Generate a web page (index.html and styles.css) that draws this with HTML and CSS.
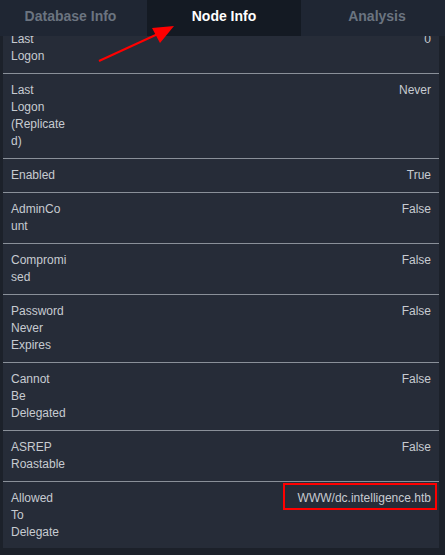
FILE: index.html
```html
<!DOCTYPE html>
<html>
<head>
<meta charset="utf-8">
<link rel="stylesheet" href="styles.css">
</head>
<body>
<div class="content">
  <div class="table">
    <div class="row"><div class="label">Last Logon</div><div class="value">0</div></div>
    <div class="row"><div class="label">Last Logon (Replicated)</div><div class="value">Never</div></div>
    <div class="row"><div class="label">Enabled</div><div class="value">True</div></div>
    <div class="row"><div class="label">AdminCount</div><div class="value">False</div></div>
    <div class="row"><div class="label">Compromised</div><div class="value">False</div></div>
    <div class="row"><div class="label">Password Never Expires</div><div class="value">False</div></div>
    <div class="row"><div class="label">Cannot Be Delegated</div><div class="value">False</div></div>
    <div class="row"><div class="label">ASREP Roastable</div><div class="value">False</div></div>
    <div class="row last"><div class="label">Allowed To Delegate</div><div class="value"><span class="highlight">WWW/dc.intelligence.htb</span></div></div>
  </div>
</div>
<div class="tabs">
  <div class="tab first">Database Info</div>
  <div class="tab active">Node Info</div>
  <div class="tab third">Analysis</div>
</div>
<svg class="arrow" width="445" height="80" viewBox="0 0 445 80">
  <line x1="99" y1="61" x2="160" y2="33" stroke="#ff0000" stroke-width="2"/>
  <polygon points="174,26 152,28 160,43" fill="#ff0000"/>
</svg>
</body>
</html>
```
FILE: styles.css
```css
html, body {
  margin: 0;
  padding: 0;
}
body {
  background: #1c212a;
  font-family: "Liberation Sans", Arial, sans-serif;
  font-size: 12px;
  color: #c7cbd1;
  width: 445px;
  height: 555px;
  overflow: hidden;
  position: relative;
}
.tabs {
  position: absolute;
  top: 0;
  left: 0;
  right: 0;
  height: 36px;
  display: grid;
  grid-template-columns: 147px 154px 144px;
  background: #1f2633;
}
.tab {
  display: flex;
  align-items: center;
  justify-content: center;
  font-weight: bold;
  font-size: 14px;
  color: #6b7480;
  padding-bottom: 4px;
  box-sizing: border-box;
}
.tab.first {
  padding-right: 6px;
}
.tab.third {
  padding-left: 8px;
}
.tab.active {
  background: #141a23;
  color: #ffffff;
}
.content {
  padding: 23px 6px 0 3px;
}
.table {
  background: #262c38;
}
.row {
  display: flex;
  justify-content: space-between;
  align-items: flex-start;
  padding: 8px 8px 8px 8px;
  line-height: 17px;
  border-bottom: 1px solid #8a9099;
}
.row.last {
  border-bottom: none;
  padding-bottom: 7px;
}
.label {
  width: 55.7px;
  overflow-wrap: anywhere;
}
.value {
  text-align: right;
}
.highlight {
  position: relative;
}
.highlight::after {
  content: "";
  position: absolute;
  left: -15px;
  right: -6px;
  top: -8px;
  bottom: -5px;
  border: 2px solid #ff0000;
}
.arrow {
  position: absolute;
  top: 0;
  left: 0;
}
```
